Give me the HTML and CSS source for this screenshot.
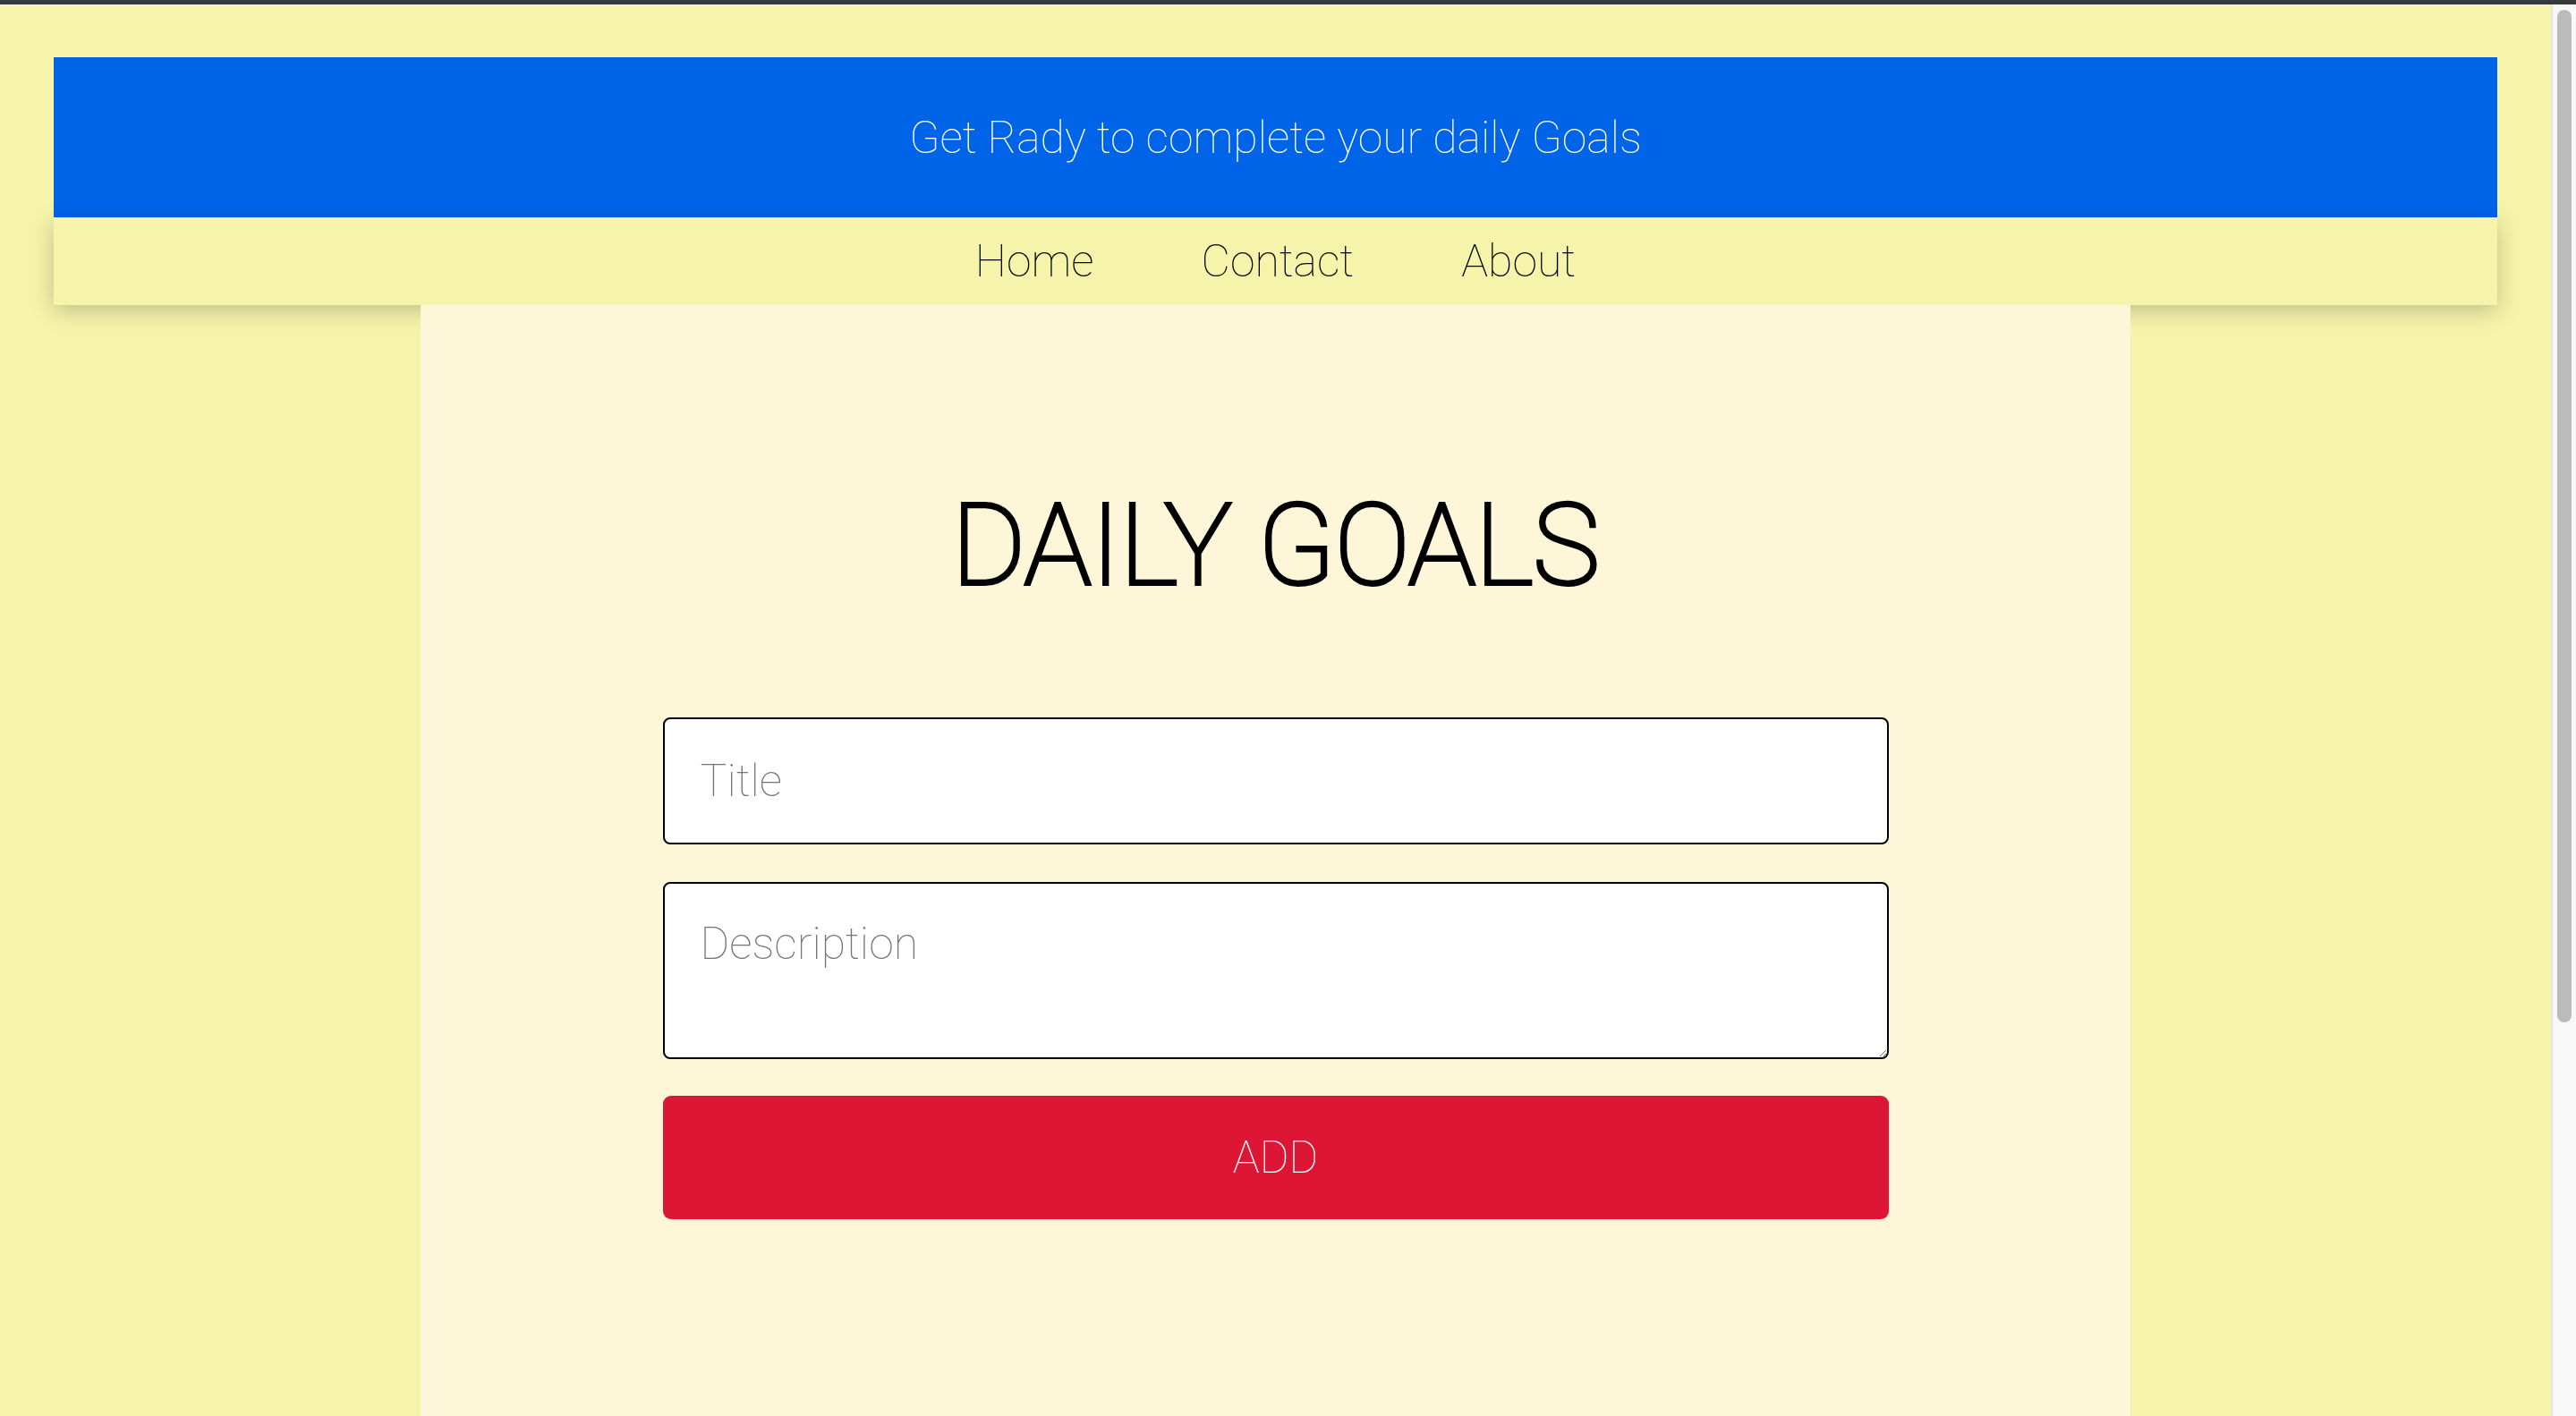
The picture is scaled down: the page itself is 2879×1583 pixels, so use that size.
FILE: index.html
```html
<!DOCTYPE html>
<html lang="en">
<head>
<meta charset="utf-8">
<title>Daily Goals</title>
<link rel="stylesheet" href="styles.css">
</head>
<body>
<div class="topline"></div>
<div class="viewport">
  <div class="page">
    <header class="site-header">
      <div class="banner">Get Rady to complete your daily Goals</div>
      <nav class="nav">
        <a class="nav-link" href="#">Home</a>
        <a class="nav-link" href="#">Contact</a>
        <a class="nav-link" href="#">About</a>
      </nav>
    </header>
    <main class="content">
      <h1 class="title">DAILY GOALS</h1>
      <form class="goal-form">
        <input class="field field-title" type="text" placeholder="Title">
        <textarea class="field field-desc" placeholder="Description"></textarea>
        <button class="add-btn" type="button">ADD</button>
      </form>
    </main>
  </div>
  <div class="scrollbar"><div class="scroll-thumb"></div></div>
</div>
</body>
</html>
```
FILE: styles.css
```css
html {
  background: #f6f4aa;
}
body {
  margin: 0;
  background: #f6f4aa;
  font-family: Roboto, "Liberation Sans", sans-serif;
  font-weight: 100;
}
.topline {
  height: 5px;
  background: #38393d;
}
.viewport {
  display: flex;
  align-items: stretch;
}
.page {
  flex: 1;
  min-width: 0;
}
.scrollbar {
  width: 28px;
  flex-shrink: 0;
  box-sizing: border-box;
  background: #f8f8f8;
  border-left: 2px solid #e4e4e4;
  padding: 6px 5px 0 5px;
}
.scroll-thumb {
  height: 1132px;
  border-radius: 8px;
  background: #bbbbbb;
}
.site-header {
  margin: 59px 60px 0;
}
.banner {
  height: 179px;
  background: #0064e9;
  color: #ffffff;
  font-size: 50px;
  display: flex;
  align-items: center;
  justify-content: center;
}
.nav {
  height: 98px;
  background: #f6f4aa;
  display: flex;
  align-items: center;
  justify-content: center;
  box-shadow: 0 6px 24px rgba(0, 0, 0, 0.22);
}
.nav-link {
  color: #000;
  text-decoration: none;
  font-size: 50px;
  padding: 0 60px;
}
.content {
  width: 67%;
  margin: 0 auto;
  min-height: 1970px;
  background: #fdf6d9;
  padding-top: 194px;
  box-sizing: border-box;
}
.title {
  margin: 0;
  text-align: center;
  font-size: 126px;
  font-weight: 100;
  letter-spacing: -0.5px;
  -webkit-text-stroke: 4px #000;
  line-height: 150px;
  color: #000;
}
.goal-form {
  width: 1370px;
  margin: 117px auto 0;
  display: flex;
  flex-direction: column;
  gap: 42px;
}
.field {
  box-sizing: border-box;
  width: 100%;
  border: 2px solid #000;
  border-radius: 8px;
  background: #fff;
  font-family: Roboto, "Liberation Sans", sans-serif;
  font-weight: 100;
  font-size: 50px;
  color: #000;
  outline: none;
}
.field::placeholder {
  color: #757575;
}
.field-title {
  height: 142px;
  padding: 0 40px;
}
.field-desc {
  height: 198px;
  padding: 38px 40px;
  resize: vertical;
  display: block;
}
.add-btn {
  height: 138px;
  margin-top: -1px;
  border: none;
  border-radius: 9px;
  background: #dd1636;
  color: #fff;
  font-family: Roboto, "Liberation Sans", sans-serif;
  font-weight: 100;
  font-size: 50px;
}
```
